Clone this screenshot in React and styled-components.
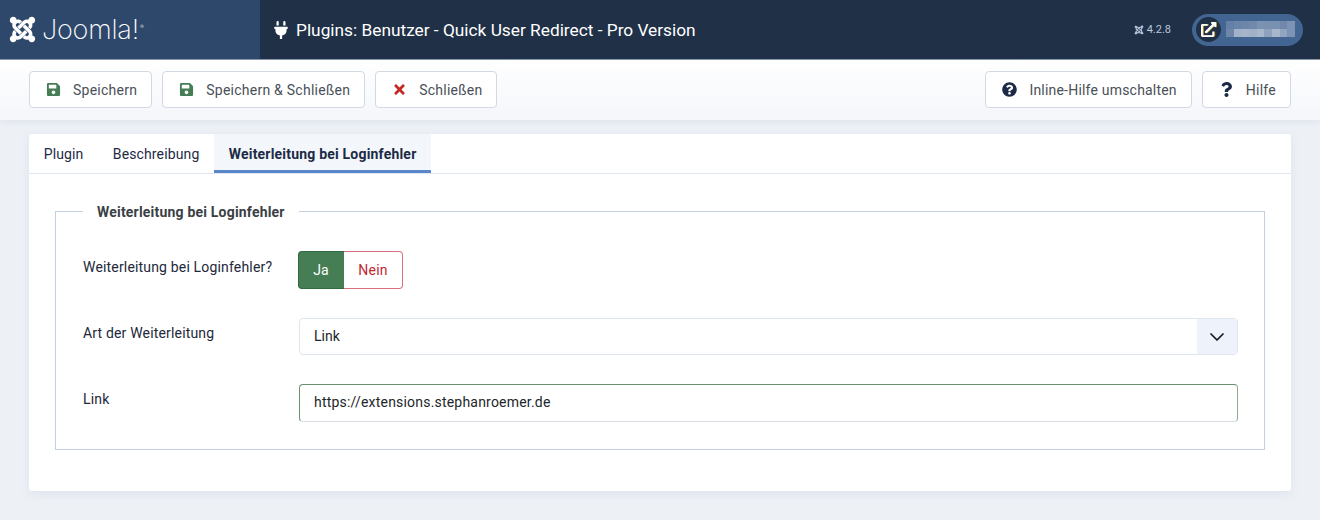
import React from 'react'
import styled, { createGlobalStyle } from 'styled-components'
import { FaJoomla, FaPlug, FaSave, FaTimes, FaQuestionCircle, FaQuestion, FaExternalLinkAlt } from 'react-icons/fa'

const Global = createGlobalStyle`
  html, body { margin: 0; padding: 0; }
  body {
    background: #edf1f6;
    font-family: Roboto, "Liberation Sans", sans-serif;
    font-size: 14px;
    color: #22262a;
  }
`

const Page = styled.div`
  width: 1320px;
  height: 520px;
  overflow: hidden;
`

const Header = styled.header`
  display: flex;
  align-items: center;
  height: 59px;
  background: #1f3047;
  border-bottom: 1px solid #8b97a8;
  color: #fff;
`

const Brand = styled.div`
  display: flex;
  align-items: center;
  gap: 5px;
  width: 260px;
  height: 100%;
  padding-left: 8px;
  box-sizing: border-box;
  background: #2e486c;
`

const BrandName = styled.span`
  font-family: Inter, sans-serif;
  font-size: 27px;
  font-weight: 200;
  letter-spacing: -0.2px;
  color: #fff;
`

const BrandMark = styled.sup`
  font-size: 6px;
  margin-left: 1px;
`

const Title = styled.h1`
  display: flex;
  align-items: center;
  gap: 6px;
  flex: 1;
  margin: 0;
  padding-left: 12px;
  font-size: 17.3px;
  font-weight: 400;
`

const Version = styled.div`
  display: flex;
  align-items: center;
  gap: 3px;
  margin-right: 21px;
  font-size: 11px;
  color: #b9c6dc;
`

const UserPill = styled.div`
  display: flex;
  align-items: center;
  gap: 5px;
  width: 111px;
  height: 32px;
  margin-right: 17px;
  padding-left: 4px;
  box-sizing: border-box;
  border-radius: 16px;
  background: #426592;
`

const UserIcon = styled.span`
  display: flex;
  align-items: center;
  justify-content: center;
  width: 25px;
  height: 25px;
  border-radius: 50%;
  background: #1f3047;
  color: #fff;
  svg {
    filter: drop-shadow(1px 0 0 #b8963c);
  }
`

const Mosaic = styled.div`
  display: grid;
  grid-template-columns: repeat(9, 7.67px);
  grid-auto-rows: 8px;
  margin-bottom: 2px;
`

const Cell = styled.span`
  background: ${p => p.$c};
`

const Toolbar = styled.div`
  display: flex;
  align-items: center;
  justify-content: space-between;
  height: 60px;
  padding: 0 29px 2px;
  box-sizing: border-box;
  background: linear-gradient(#ffffff, #f4f6fa);
  box-shadow: 0 2px 6px rgba(140, 155, 180, 0.15);
`

const ButtonGroup = styled.div`
  display: flex;
  gap: 10px;
`

const ToolButton = styled.button`
  display: flex;
  align-items: center;
  gap: 12px;
  height: 37px;
  padding: 1px 14px 0 16px;
  background: #fff;
  border: 1px solid #d3d9e2;
  border-radius: 4px;
  font-family: inherit;
  font-size: 14px;
  letter-spacing: ${p => (p.$tight ? 0.2 : 0.25)}px;
  color: #495057;
`

const IconSlot = styled.span`
  display: flex;
  justify-content: center;
  width: 15px;
  font-size: 15px;
  color: ${p => p.$color};
`

const Card = styled.main`
  margin: 14px 29px 0;
  height: 357px;
  background: #fff;
  border-radius: 3px;
  box-shadow: 0 3px 8px rgba(140, 155, 180, 0.15);
`

const Tabs = styled.nav`
  display: flex;
  height: 39px;
  border-bottom: 1px solid #dfe6f2;
`

const Tab = styled.div`
  display: flex;
  align-items: center;
  padding: 0 14.7px;
  font-size: 14px;
  font-weight: ${p => (p.$active ? 700 : 400)};
  letter-spacing: ${p => (p.$active ? 0.2 : 0.13)}px;
  color: #1c2a45;
  background: ${p => (p.$active ? '#f3f6fb' : 'transparent')};
  box-shadow: ${p => (p.$active ? 'inset 0 -3px 0 #5a87c9' : 'none')};
`

const Fieldset = styled.fieldset`
  margin: 28px 26px 0;
  padding: 31px 26px 0 27px;
  height: 248px;
  box-sizing: border-box;
  border: 1px solid #c3cfe2;
`

const Legend = styled.legend`
  padding: 2px 14px 0;
  font-size: 14px;
  font-weight: 700;
  letter-spacing: 0.2px;
  color: #3a3f46;
`

const Row = styled.div`
  display: flex;
  align-items: flex-start;
  margin-bottom: ${p => p.$gap}px;
`

const Label = styled.label`
  width: 216px;
  flex-shrink: 0;
  padding-top: ${p => p.$top}px;
  font-size: 14px;
  letter-spacing: 0.17px;
  color: #22283a;
`

const Switcher = styled.div`
  display: flex;
  height: 38px;
  width: 105px;
  margin-left: -1px;
`

const SwitchYes = styled.div`
  display: flex;
  align-items: center;
  justify-content: center;
  width: 46px;
  padding-right: 1px;
  box-sizing: border-box;
  background: #457d54;
  border: 1px solid #2f6b3f;
  border-right: 0;
  border-radius: 4px 0 0 4px;
  color: #fff;
`

const SwitchNo = styled.div`
  display: flex;
  align-items: center;
  justify-content: center;
  flex: 1;
  border: 1px solid #d9727c;
  border-left: 0;
  border-radius: 0 4px 4px 0;
  letter-spacing: 0.3px;
  color: #c0282f;
`

const Select = styled.div`
  display: flex;
  align-items: center;
  justify-content: space-between;
  flex: 1;
  height: 37px;
  padding-left: 14px;
  box-sizing: border-box;
  border: 1px solid #dfe5ef;
  border-radius: 4px;
  color: #22262a;
`

const SelectValue = styled.span`
  padding-bottom: 1px;
`

const Caret = styled.span`
  display: flex;
  align-items: center;
  justify-content: center;
  width: 40px;
  height: 100%;
  background: #eef2fb;
`

const Input = styled.div`
  display: flex;
  align-items: center;
  flex: 1;
  height: 38px;
  padding: 0 0 2px 14px;
  box-sizing: border-box;
  border: 1px solid #d9dde3;
  border-top-color: #6a9270;
  border-left-color: #6a9270;
  border-right-color: #8dab93;
  border-radius: 4px;
  letter-spacing: 0.2px;
  color: #22262a;
`

const mosaicColors = [
  '#6480a6', '#6a84a9', '#6c86aa', '#7089ac', '#7b92b3', '#7a90b1', '#7890b1', '#7188ac', '#7e94b4',
  '#6d86aa', '#a2b1c8', '#a6b4ca', '#a2b1c8', '#a9b7cc', '#8ea1bd', '#a8b6cc', '#92a5c0', '#7e94b4',
]

const App = () => (
  <Page>
    <Global />
    <Header>
      <Brand>
        <FaJoomla size={29} />
        <BrandName>Joomla!<BrandMark>®</BrandMark></BrandName>
      </Brand>
      <Title><FaPlug size={18} />Plugins: Benutzer - Quick User Redirect - Pro Version</Title>
      <Version><FaJoomla size={10} />4.2.8</Version>
      <UserPill>
        <UserIcon><FaExternalLinkAlt size={15} /></UserIcon>
        <Mosaic>{mosaicColors.map((c, i) => <Cell key={i} $c={c} />)}</Mosaic>
      </UserPill>
    </Header>
    <Toolbar>
      <ButtonGroup>
        <ToolButton><IconSlot $color="#457d54"><FaSave /></IconSlot>Speichern</ToolButton>
        <ToolButton><IconSlot $color="#457d54"><FaSave /></IconSlot>Speichern &amp; Schließen</ToolButton>
        <ToolButton><IconSlot $color="#c52827"><FaTimes /></IconSlot>Schließen</ToolButton>
      </ButtonGroup>
      <ButtonGroup>
        <ToolButton $tight><IconSlot $color="#1c2a45"><FaQuestionCircle /></IconSlot>Inline-Hilfe umschalten</ToolButton>
        <ToolButton><IconSlot $color="#1c2a45"><FaQuestion /></IconSlot>Hilfe</ToolButton>
      </ButtonGroup>
    </Toolbar>
    <Card>
      <Tabs>
        <Tab>Plugin</Tab>
        <Tab>Beschreibung</Tab>
        <Tab $active>Weiterleitung bei Loginfehler</Tab>
      </Tabs>
      <Fieldset>
        <Legend>Weiterleitung bei Loginfehler</Legend>
        <Row $gap={29}>
          <Label $top={8}>Weiterleitung bei Loginfehler?</Label>
          <Switcher>
            <SwitchYes>Ja</SwitchYes>
            <SwitchNo>Nein</SwitchNo>
          </Switcher>
        </Row>
        <Row $gap={29}>
          <Label $top={7}>Art der Weiterleitung</Label>
          <Select>
            <SelectValue>Link</SelectValue>
            <Caret>
              <svg width="14" height="8" viewBox="0 0 14 8" fill="none" stroke="#14181f" strokeWidth="1.7" strokeLinecap="round" strokeLinejoin="round"><path d="M1 1l6 6 6-6" /></svg>
            </Caret>
          </Select>
        </Row>
        <Row $gap={0}>
          <Label $top={7}>Link</Label>
          <Input>https://extensions.stephanroemer.de</Input>
        </Row>
      </Fieldset>
    </Card>
  </Page>
)

export default App
